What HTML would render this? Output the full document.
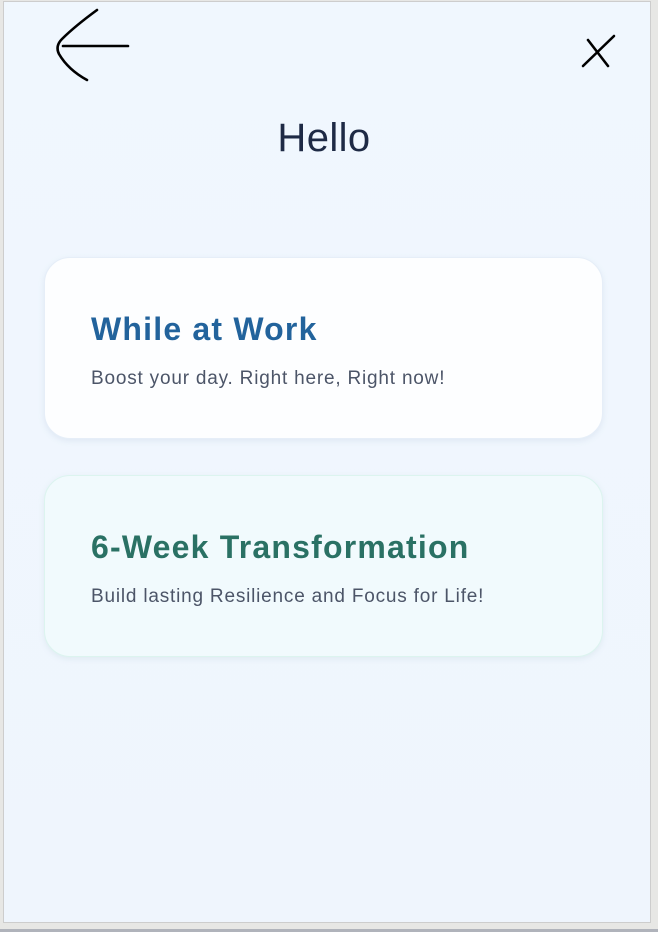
<!DOCTYPE html>
<html><head><meta charset="utf-8"><style>
html,body{margin:0;padding:0;}
body{width:658px;height:932px;background:#e7e7e5;position:relative;overflow:hidden;font-family:"Liberation Sans",sans-serif;}
.frame{position:absolute;left:3px;top:1px;width:646px;height:920px;border:1px solid #cdcdcd;background:linear-gradient(180deg,#f0f7fe 0%,#eff5fd 100%);}
.bot{position:absolute;left:0;top:929px;width:658px;height:3px;background:#b0b3bb;}
.hello{position:absolute;left:0;width:640px;top:114px;text-align:center;font-size:40px;color:#1e2a45;letter-spacing:.4px;}
.card{position:absolute;left:40px;width:559px;height:182px;border-radius:26px;box-sizing:border-box;}
.c1{top:255px;background:#fdfeff;border:1px solid #e6eef8;box-shadow:0 2px 6px rgba(150,170,200,.18);}
.c2{top:473px;background:#f1fafd;border:1px solid #dcf4ef;box-shadow:0 2px 6px rgba(150,190,190,.18);}
.t{position:absolute;left:46px;top:53px;font-size:32px;font-weight:bold;letter-spacing:1.2px;}
.s{position:absolute;left:46px;top:110px;font-size:19px;color:#4c5568;letter-spacing:.8px;}
</style></head><body>
<div class="frame">
<svg width="646" height="100" style="position:absolute;left:-4px;top:-1px" fill="none" stroke="#000" stroke-width="2.6" stroke-linecap="round">
<path d="M97 9 C82 20 70 30 62 38 Q55 45 59 53 C66 65 76 73 87 79" />
<path d="M63 45 L128 45"/>
<path d="M614 35 L583 65 M588 39 L608 65"/>
</svg>
<div class="hello">Hello</div>
<div class="card c1"><div class="t" style="color:#22639c">While at Work</div><div class="s">Boost your day. Right here, Right now!</div></div>
<div class="card c2"><div class="t" style="color:#2a7164">6-Week Transformation</div><div class="s">Build lasting Resilience and Focus for Life!</div></div>
</div>
<div class="bot"></div>
</body></html>
